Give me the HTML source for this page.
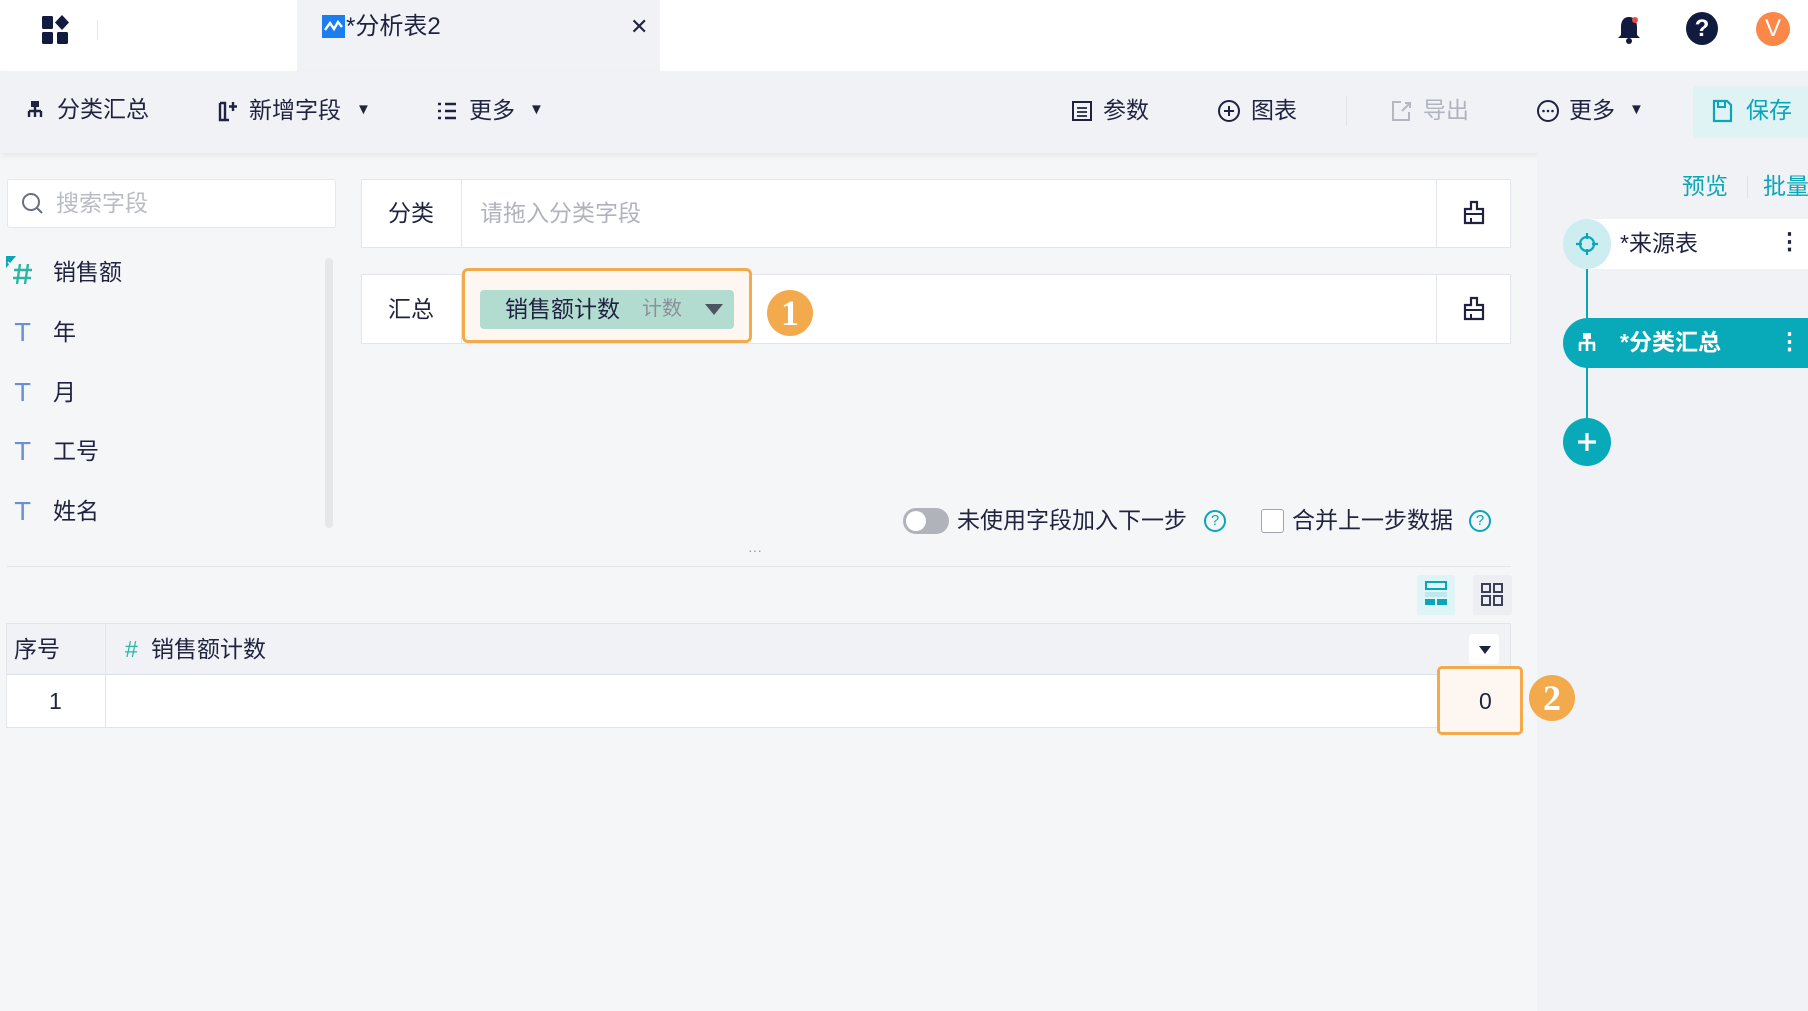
<!DOCTYPE html>
<html><head><meta charset="utf-8"><style>
*{margin:0;padding:0;box-sizing:border-box}
body{width:1808px;height:1011px;overflow:hidden;background:#f5f6f8;font-family:"Liberation Sans","Noto Sans CJK SC",sans-serif;color:#1f2340;position:relative}
.a{position:absolute}
.t{font-size:23px;line-height:1;white-space:nowrap}
.teal{color:#0aa6b7}
.T{font-size:25px;color:#6b8fd6;font-family:"DejaVu Sans",sans-serif}
</style></head><body>
<!-- top bar -->
<div class="a" style="left:0;top:0;width:1808px;height:71px;background:#fff"></div>
<svg class="a" style="left:40px;top:14px" width="32" height="32" viewBox="0 0 32 32"><rect x="2" y="2" width="11" height="13" rx="1.5" fill="#111a3f"/><path d="M22 1 L29 8.5 L22 16 L15 8.5Z" fill="#111a3f"/><rect x="2" y="18" width="11" height="12" rx="1.5" fill="#111a3f"/><rect x="17" y="18" width="11" height="12" rx="1.5" fill="#111a3f"/></svg>
<div class="a" style="left:97px;top:20px;width:1px;height:20px;background:#e5e7ec"></div>
<div class="a" style="left:297px;top:0;width:363px;height:71px;background:#f0f2f6"></div>
<svg class="a" style="left:322px;top:15px" width="23" height="23"><rect width="23" height="23" fill="#1a7ef0"/><path d="M3 15 L8 8 L12 14 L16 7 L20 12" stroke="#fff" stroke-width="2.4" fill="none"/></svg>
<div class="a t" style="left:346px;top:15px;font-size:24px">*分析表2</div>
<div class="a t" style="left:630px;top:16px;font-size:22px">✕</div>
<svg class="a" style="left:1615px;top:14px" width="28" height="32"><path d="M14 3 C8 3 6 8 6 13 L6 21 L3 24 L25 24 L22 21 L22 13 C22 8 20 3 14 3Z" fill="#111a3f"/><circle cx="14" cy="27" r="3" fill="#111a3f"/><circle cx="20" cy="6" r="3" fill="#e84a4a"/></svg>
<div class="a" style="left:1686px;top:12px;width:32px;height:33px;border-radius:50%;background:#111a3f;color:#fff;font-size:24px;font-weight:bold;text-align:center;line-height:33px">?</div>
<div class="a" style="left:1756px;top:12px;width:34px;height:34px;border-radius:50%;background:#fb8748;color:#fff;font-size:24px;text-align:center;line-height:34px">V</div>
<!-- toolbar -->
<div class="a" style="left:0;top:71px;width:1808px;height:82px;background:#f0f2f5;box-shadow:0 3px 6px rgba(0,0,0,.06)"></div>
<svg class="a" style="left:25px;top:100px" width="20" height="20"><rect x="6" y="1" width="8" height="6" fill="#1f2340"/><path d="M10 7V11M4 11H16M4 11V17M16 11V17M10 11V17" stroke="#1f2340" stroke-width="2.4" fill="none"/></svg>
<div class="a t" style="left:57px;top:98px">分类汇总</div>
<svg class="a" style="left:217px;top:99px" width="24" height="24"><path d="M3 4V21H12M3 4H8V21M16 3V12M12 7.5H20" stroke="#1f2340" stroke-width="2.4" fill="none"/></svg>
<div class="a t" style="left:249px;top:99px">新增字段</div>
<div class="a t" style="left:356px;top:102px;font-size:15px">▼</div>
<svg class="a" style="left:436px;top:100px" width="22" height="22"><path d="M2 4H5M9 4H20M2 11H5M9 11H20M2 18H5M9 18H20" stroke="#1f2340" stroke-width="2.6" fill="none"/></svg>
<div class="a t" style="left:469px;top:99px">更多</div>
<div class="a t" style="left:529px;top:102px;font-size:15px">▼</div>
<svg class="a" style="left:1071px;top:100px" width="22" height="22"><rect x="2" y="2" width="18" height="18" fill="none" stroke="#1f2340" stroke-width="2"/><path d="M6 8H16M6 12H16M6 16H16" stroke="#1f2340" stroke-width="1.8"/></svg>
<div class="a t" style="left:1103px;top:99px">参数</div>
<svg class="a" style="left:1217px;top:99px" width="24" height="24"><circle cx="12" cy="12" r="10" fill="none" stroke="#1f2340" stroke-width="2"/><path d="M12 7V17M7 12H17" stroke="#1f2340" stroke-width="2"/></svg>
<div class="a t" style="left:1251px;top:99px">图表</div>
<div class="a" style="left:1346px;top:96px;width:1px;height:30px;background:#e0e3e8"></div>
<svg class="a" style="left:1390px;top:99px" width="24" height="24"><path d="M11 3H3V21H19V13M12 12L20 4M15 4H20V9" stroke="#b4b8c2" stroke-width="2" fill="none"/></svg>
<div class="a t" style="left:1423px;top:99px;color:#b0b4be">导出</div>
<svg class="a" style="left:1536px;top:99px" width="24" height="24"><circle cx="12" cy="12" r="10" fill="none" stroke="#1f2340" stroke-width="2"/><circle cx="7.5" cy="12" r="1.3" fill="#1f2340"/><circle cx="12" cy="12" r="1.3" fill="#1f2340"/><circle cx="16.5" cy="12" r="1.3" fill="#1f2340"/></svg>
<div class="a t" style="left:1569px;top:99px">更多</div>
<div class="a t" style="left:1629px;top:102px;font-size:15px">▼</div>
<div class="a" style="left:1693px;top:86px;width:115px;height:52px;background:#dff3f5;border-radius:4px 0 0 4px"></div>
<svg class="a" style="left:1711px;top:99px" width="22" height="24"><path d="M3 2H16L20 6V22H3Z" fill="none" stroke="#0aa6b7" stroke-width="2.2"/><path d="M7 2V8H14V2" stroke="#0aa6b7" stroke-width="2" fill="none"/></svg>
<div class="a t teal" style="left:1746px;top:99px">保存</div>
<!-- left panel -->
<div class="a" style="left:7px;top:179px;width:329px;height:49px;background:#fff;border:1px solid #e5e7ec;border-radius:3px"></div>
<svg class="a" style="left:20px;top:191px" width="26" height="26"><circle cx="11" cy="11" r="8" fill="none" stroke="#6b7080" stroke-width="2"/><path d="M17 17L22 22" stroke="#6b7080" stroke-width="2"/></svg>
<div class="a t" style="left:56px;top:192px;color:#b9bcc4">搜索字段</div>
<svg class="a" style="left:6px;top:256px" width="30" height="30"><path d="M0 0H10L0 12Z" fill="#0aa6b7"/><path d="M2 6L5 9L10 2" stroke="#fff" stroke-width="1.5" fill="none"/><path d="M14 8L11 28M22 8L19 28M8 14H26M7 22H25" stroke="#2bb5a4" stroke-width="2.4"/></svg>
<div class="a t" style="left:53px;top:261px">销售额</div>
<div class="a t T" style="left:15px;top:320px">T</div><div class="a t" style="left:53px;top:321px">年</div>
<div class="a t T" style="left:15px;top:380px">T</div><div class="a t" style="left:53px;top:381px">月</div>
<div class="a t T" style="left:15px;top:439px">T</div><div class="a t" style="left:53px;top:440px">工号</div>
<div class="a t T" style="left:15px;top:499px">T</div><div class="a t" style="left:53px;top:500px">姓名</div>
<div class="a" style="left:325px;top:258px;width:8px;height:270px;background:#e6e7ea;border-radius:4px"></div>
<!-- 分类 box -->
<div class="a" style="left:361px;top:179px;width:1150px;height:69px;background:#fff;border:1px solid #e3e5ea"></div>
<div class="a" style="left:461px;top:180px;width:1px;height:67px;background:#e3e5ea"></div>
<div class="a" style="left:1436px;top:180px;width:1px;height:67px;background:#e3e5ea"></div>
<div class="a t" style="left:388px;top:202px">分类</div>
<div class="a t" style="left:480px;top:202px;color:#b0b3bc">请拖入分类字段</div>
<svg class="a" style="left:1462px;top:200px" width="24" height="26"><path d="M9 2H15V9H21V23H3V9H9Z" fill="none" stroke="#1f2340" stroke-width="2.2"/><path d="M3 14H21M9 18V23" stroke="#1f2340" stroke-width="2"/></svg>
<!-- 汇总 box -->
<div class="a" style="left:361px;top:274px;width:1150px;height:70px;background:#fff;border:1px solid #e3e5ea"></div>
<div class="a" style="left:461px;top:275px;width:1px;height:68px;background:#e3e5ea"></div>
<div class="a" style="left:1436px;top:275px;width:1px;height:68px;background:#e3e5ea"></div>
<div class="a t" style="left:388px;top:298px">汇总</div>
<svg class="a" style="left:1462px;top:296px" width="24" height="26"><path d="M9 2H15V9H21V23H3V9H9Z" fill="none" stroke="#1f2340" stroke-width="2.2"/><path d="M3 14H21M9 18V23" stroke="#1f2340" stroke-width="2"/></svg>
<div class="a" style="left:462px;top:268px;width:290px;height:75px;background:#fef7f1;border:3px solid #f2aa4c;border-radius:6px"></div>
<div class="a" style="left:480px;top:290px;width:254px;height:39px;background:#b3dcd1;border-radius:4px"></div>
<div class="a t" style="left:505px;top:298px">销售额计数</div>
<div class="a t" style="left:642px;top:299px;font-size:20px;color:#8b8f98">计数</div>
<div class="a" style="left:705px;top:304px;width:0;height:0;border-left:9px solid transparent;border-right:9px solid transparent;border-top:11px solid #4f5560"></div>
<div class="a" style="left:767px;top:290px;width:46px;height:46px;border-radius:50%;background:#f2aa4c;color:#fff;font-family:'Liberation Serif',serif;font-size:36px;font-weight:bold;text-align:center;line-height:46px">1</div>
<!-- options -->
<div class="a" style="left:903px;top:508px;width:46px;height:26px;border-radius:13px;background:#b0b3ba"></div>
<div class="a" style="left:906px;top:511px;width:20px;height:20px;border-radius:50%;background:#fff"></div>
<div class="a t" style="left:957px;top:509px">未使用字段加入下一步</div>
<div class="a" style="left:1204px;top:510px;width:22px;height:22px;border-radius:50%;border:2px solid #0aa6b7;color:#0aa6b7;font-size:15px;text-align:center;line-height:18px">?</div>
<div class="a" style="left:1261px;top:509px;width:23px;height:24px;border:1.5px solid #a0a4ae;border-radius:3px;background:#fff"></div>
<div class="a t" style="left:1292px;top:509px">合并上一步数据</div>
<div class="a" style="left:1469px;top:510px;width:22px;height:22px;border-radius:50%;border:2px solid #0aa6b7;color:#0aa6b7;font-size:15px;text-align:center;line-height:18px">?</div>
<div class="a" style="left:748px;top:542px;font-size:14px;color:#999">···</div>
<div class="a" style="left:7px;top:566px;width:1504px;height:1px;background:#e3e5ea"></div>
<div class="a" style="left:1417px;top:575px;width:38px;height:40px;background:#dff4f7;border-radius:3px"></div>
<svg class="a" style="left:1425px;top:581px" width="22" height="26"><rect x="1" y="1" width="20" height="7" fill="none" stroke="#0aa6b7" stroke-width="2"/><rect x="0" y="11" width="22" height="5" fill="#bfe8ee"/><rect x="0" y="18" width="10" height="6" fill="#0aa6b7"/><rect x="12" y="18" width="10" height="6" fill="#0aa6b7"/></svg>
<div class="a" style="left:1473px;top:575px;width:39px;height:40px;background:#eceef2;border-radius:3px"></div>
<svg class="a" style="left:1481px;top:583px" width="22" height="24"><rect x="1" y="1" width="8" height="8" fill="none" stroke="#3a3f5a" stroke-width="2"/><rect x="13" y="1" width="8" height="8" fill="none" stroke="#3a3f5a" stroke-width="2"/><rect x="1" y="13" width="8" height="9" fill="none" stroke="#3a3f5a" stroke-width="2"/><rect x="13" y="13" width="8" height="9" fill="none" stroke="#3a3f5a" stroke-width="2"/></svg>
<!-- table -->
<div class="a" style="left:6px;top:623px;width:1505px;height:105px;border:1px solid #e3e5ea;background:#fff"></div>
<div class="a" style="left:7px;top:624px;width:1503px;height:51px;background:#f0f2f5;border-bottom:1px solid #dcdfe5"></div>
<div class="a" style="left:105px;top:624px;width:1px;height:103px;background:#e3e5ea"></div>
<div class="a t" style="left:14px;top:638px">序号</div>
<div class="a t" style="left:125px;top:638px;color:#2bb5a4">#</div>
<div class="a t" style="left:151px;top:638px">销售额计数</div>
<div class="a" style="left:1469px;top:634px;width:30px;height:30px;background:#fff;border-radius:3px"></div>
<div class="a" style="left:1479px;top:646px;width:0;height:0;border-left:6px solid transparent;border-right:6px solid transparent;border-top:8px solid #1f2340"></div>
<div class="a t" style="left:49px;top:690px">1</div>
<div class="a" style="left:1437px;top:666px;width:86px;height:69px;border:3px solid #f2aa4c;border-radius:5px;background:#fef7f1"></div>
<div class="a t" style="left:1479px;top:690px">0</div>
<!-- right panel -->
<div class="a" style="left:1537px;top:153px;width:271px;height:858px;background:#f0f2f5"></div>
<div class="a" style="left:1529px;top:675px;width:46px;height:46px;border-radius:50%;background:#f2aa4c;color:#fff;font-family:'Liberation Serif',serif;font-size:36px;font-weight:bold;text-align:center;line-height:46px">2</div>
<div class="a t teal" style="left:1682px;top:175px">预览</div>
<div class="a" style="left:1747px;top:176px;width:1px;height:22px;background:#dde0e5"></div>
<div class="a t teal" style="left:1763px;top:175px">批量</div>
<div class="a" style="left:1563px;top:219px;width:245px;height:50px;background:#fff;border-radius:25px 0 0 25px"></div>
<div class="a" style="left:1563px;top:219px;width:48px;height:50px;border-radius:50%;background:#cdedf1"></div>
<svg class="a" style="left:1575px;top:232px" width="24" height="24"><circle cx="12" cy="12" r="7" fill="none" stroke="#0aa6b7" stroke-width="2.2"/><path d="M12 1V7M12 17V23M1 12H7M17 12H23" stroke="#0aa6b7" stroke-width="2.2"/></svg>
<div class="a t" style="left:1620px;top:232px">*来源表</div>
<div class="a t" style="left:1778px;top:230px;font-weight:bold">⋮</div>
<div class="a" style="left:1586px;top:269px;width:2px;height:150px;background:#0aa6b7"></div>
<div class="a" style="left:1563px;top:318px;width:245px;height:50px;background:#08a9b9;border-radius:25px 0 0 25px"></div>
<svg class="a" style="left:1576px;top:332px" width="22" height="22"><rect x="7" y="1" width="8" height="6" fill="#fff"/><path d="M11 7V11M3 11H19M4 11V19M18 11V19M11 11V19" stroke="#fff" stroke-width="2.6" fill="none"/></svg>
<div class="a t" style="left:1620px;top:331px;color:#fff;font-weight:bold">*分类汇总</div>
<div class="a t" style="left:1778px;top:330px;color:#fff;font-weight:bold">⋮</div>
<div class="a" style="left:1563px;top:418px;width:48px;height:48px;border-radius:50%;background:#08a9b9"></div>
<svg class="a" style="left:1575px;top:430px" width="24" height="24"><path d="M12 3V21M3 12H21" stroke="#fff" stroke-width="3.2"/></svg>
</body></html>
